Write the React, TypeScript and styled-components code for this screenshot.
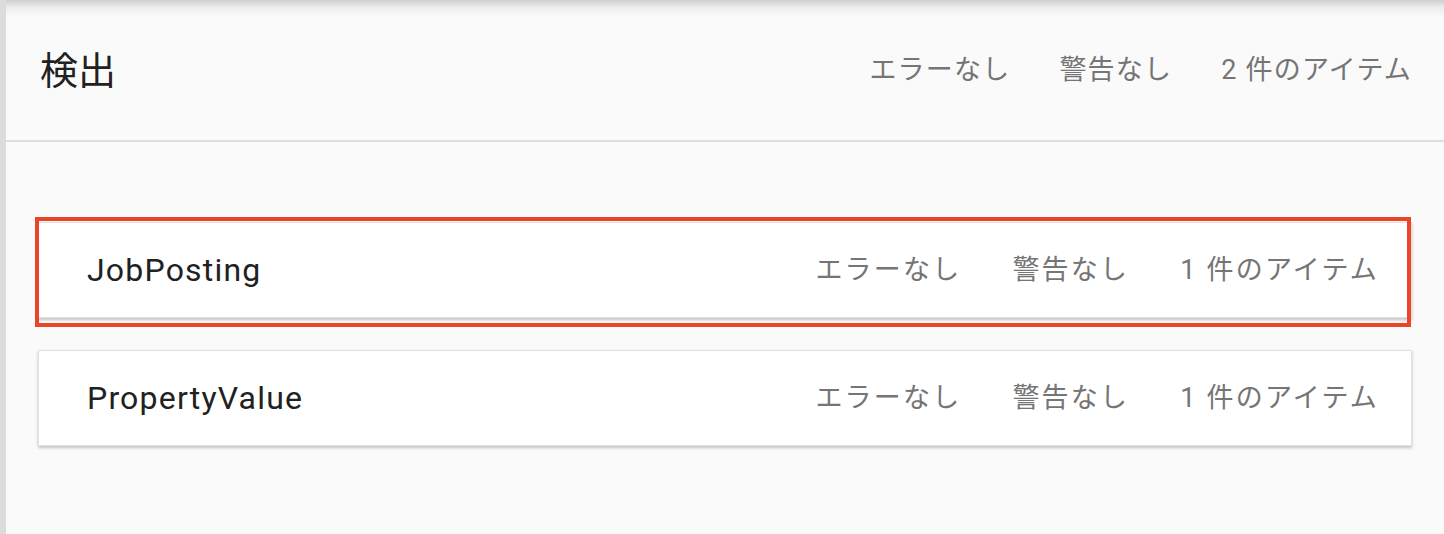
import React from "react";
import styled, { createGlobalStyle } from "styled-components";

const GlobalStyle = createGlobalStyle`
  html, body {
    margin: 0;
    padding: 0;
    background: #fafafa;
  }
  body {
    font-family: Roboto, "Noto Sans CJK JP", sans-serif;
    -webkit-font-smoothing: antialiased;
  }
`;

const Page = styled.div`
  display: flex;
  width: 1444px;
  height: 534px;
  overflow: hidden;
  background: linear-gradient(to bottom, #cfcfcf 0px, #ececec 7px, #fafafa 17px);
`;

const Rail = styled.div`
  width: 6px;
  flex: none;
  background: #dcdcdc;
`;

const Main = styled.main`
  flex: 1;
  display: flex;
  flex-direction: column;
`;

const Header = styled.header`
  display: flex;
  align-items: center;
  justify-content: space-between;
  padding: 0 32px 0 34px;
  border-bottom: 2px solid #dfdfdf;
  box-sizing: border-box;
  height: 142px;
`;

const Title = styled.h1`
  margin: 0;
  font-family: Roboto, "Noto Sans CJK JP", sans-serif;
  font-weight: 400;
  font-size: 38px;
  line-height: 1;
  color: #212121;
  position: relative;
  top: 1px;
`;

const Stats = styled.div<{ $gap: number }>`
  display: flex;
  align-items: center;
  gap: ${(p) => p.$gap}px;
`;

const Stat = styled.span<{ $size: number; $spacing: number }>`
  font-family: Roboto, "Noto Sans CJK JP", sans-serif;
  font-size: ${(p) => p.$size}px;
  letter-spacing: ${(p) => p.$spacing}px;
  color: #757575;
  line-height: 1;
  white-space: nowrap;
`;

const List = styled.section`
  display: flex;
  flex-direction: column;
  gap: 32px;
  padding: 80px 32px 0 32px;
`;

const CardSlot = styled.div`
  position: relative;
`;

const Card = styled.div`
  height: 96px;
  box-sizing: border-box;
  display: flex;
  align-items: center;
  justify-content: space-between;
  padding: 0 32px 0 48px;
  background: #ffffff;
  border: 1px solid #e0e0e0;
  box-shadow: 0 2px 3px rgba(0, 0, 0, 0.22);
`;

const CardName = styled.span`
  font-family: Roboto, "Noto Sans CJK JP", sans-serif;
  font-size: 32px;
  letter-spacing: 1.2px;
  color: #212121;
  line-height: 1;
`;

const Highlight = styled.div`
  position: absolute;
  top: -5px;
  left: -3px;
  right: 1px;
  bottom: -9px;
  border: 4px solid #ea4429;
  pointer-events: none;
`;

type Row = { name: string; count: number; highlighted?: boolean };

const rows: Row[] = [
  { name: "JobPosting", count: 1, highlighted: true },
  { name: "PropertyValue", count: 1 },
];

export default function App() {
  return (
    <>
      <GlobalStyle />
      <Page>
        <Rail />
        <Main>
          <Header>
            <Title>検出</Title>
            <Stats $gap={49}>
              <Stat $size={27} $spacing={1.2}>エラーなし</Stat>
              <Stat $size={27} $spacing={1.2}>警告なし</Stat>
              <Stat $size={27} $spacing={1.2}>2 件のアイテム</Stat>
            </Stats>
          </Header>
          <List>
            {rows.map((r) => (
              <CardSlot key={r.name}>
                <Card>
                  <CardName>{r.name}</CardName>
                  <Stats $gap={51}>
                    <Stat $size={27} $spacing={2.2}>エラーなし</Stat>
                    <Stat $size={27} $spacing={2.2}>警告なし</Stat>
                    <Stat $size={27} $spacing={2.2}>{r.count} 件のアイテム</Stat>
                  </Stats>
                </Card>
                {r.highlighted && <Highlight />}
              </CardSlot>
            ))}
          </List>
        </Main>
      </Page>
    </>
  );
}
